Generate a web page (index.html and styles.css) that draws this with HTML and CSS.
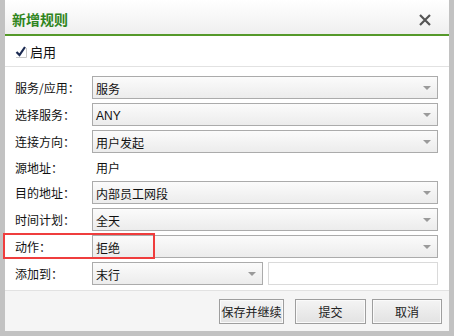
FILE: index.html
```html
<!DOCTYPE html>
<html>
<head>
<meta charset="utf-8">
<link rel="stylesheet" href="styles.css">
</head>
<body>
<div class="dialog">
  <div class="titlebar">
    <span class="title">新增规则</span>
    <svg class="close" width="12" height="12" viewBox="0 0 12 12"><path d="M1 1L11 11M11 1L1 11" stroke="#555" stroke-width="2.2"/></svg>
  </div>
  <div class="enable">
    <svg class="check" width="12" height="13" viewBox="0 0 12 13"><path d="M11.5 3V12.5H1" fill="none" stroke="#c8c8c8" stroke-width="1"/><path d="M1.5 7L4.5 10L10 2" fill="none" stroke="#1c2b52" stroke-width="2.2"/></svg>
    <span>启用</span>
  </div>
  <div class="form">
    <div class="row"><span class="label">服务/应用：</span><div class="select"><span>服务</span><i class="arrow"></i></div></div>
    <div class="row"><span class="label">选择服务：</span><div class="select"><span class="latin">ANY</span><i class="arrow"></i></div></div>
    <div class="row"><span class="label">连接方向：</span><div class="select"><span>用户发起</span><i class="arrow"></i></div></div>
    <div class="row text"><span class="label">源地址：</span><span class="value">用户</span></div>
    <div class="row"><span class="label">目的地址：</span><div class="select"><span>内部员工网段</span><i class="arrow"></i></div></div>
    <div class="row"><span class="label">时间计划：</span><div class="select"><span>全天</span><i class="arrow"></i></div></div>
    <div class="row"><span class="label">动作：</span><div class="select"><span>拒绝</span><i class="arrow"></i></div></div>
    <div class="row"><span class="label">添加到：</span><div class="split"><div class="select small"><span>末行</span><i class="arrow"></i></div><div class="input"></div></div></div>
  </div>
  <div class="footer">
    <button class="btn b1">保存并继续</button>
    <button class="btn b2">提交</button>
    <button class="btn b3">取消</button>
  </div>
  <div class="highlight"></div>
</div>
</body>
</html>
```
FILE: styles.css
```css
html, body {
  margin: 0;
  padding: 0;
  background: #c2c2c2;
  font-family: "Noto Sans CJK SC", "Noto Sans", sans-serif;
  font-size: 12px;
  color: #111;
}
.dialog {
  position: relative;
  margin-left: 5px;
  width: 444px;
  height: 331px;
  background: #fff;
  display: flex;
  flex-direction: column;
}
.titlebar {
  height: 34px;
  border-bottom: 2px solid #55992a;
  background: linear-gradient(#ffffff, #efefef);
  display: flex;
  align-items: center;
  padding: 0 18px 0 7px;
  justify-content: space-between;
}
.title {
  font-size: 14px;
  font-weight: bold;
  color: #2f8520;
  margin-top: 4px;
}
.close {
  margin-top: 5px;
}
.enable {
  height: 30px;
  border-bottom: 1px solid #e2e2e2;
  display: flex;
  align-items: center;
  padding-left: 10px;
  gap: 3px;
  font-size: 13px;
}
.form {
  display: flex;
  flex-direction: column;
  gap: 4px;
  padding: 9px 11px 5px 10px;
}
.row {
  display: flex;
  align-items: center;
  height: 23px;
}
.row.text {
  height: 20px;
}
.label {
  width: 77px;
  flex: none;
  font-size: 12px;
}
.value {
  padding-left: 4px;
}
.select {
  flex: 1;
  height: 21px;
  border: 1px solid #ababab;
  background: linear-gradient(#fbfbfb, #ececec);
  display: flex;
  align-items: center;
  justify-content: space-between;
  padding: 0 6px 0 3px;
  font-size: 12px;
}
.select span {
  margin-top: 2px;
}
.latin {
  font-family: "Liberation Sans", sans-serif;
  font-size: 12px;
}
.arrow {
  width: 0;
  height: 0;
  border-left: 4px solid transparent;
  border-right: 4px solid transparent;
  border-top: 4px solid #9a9a9a;
}
.split {
  flex: 1;
  display: flex;
  gap: 5px;
}
.select.small {
  flex: none;
  width: 160px;
}
.input {
  width: 168px;
  height: 21px;
  border: 1px solid #dadada;
  background: #fff;
}
.footer {
  flex: 1;
  border-top: 1px solid #e2e2e2;
  background: #f5f5f5;
  display: flex;
  justify-content: flex-end;
  align-items: flex-start;
  padding: 8px 7px 0 0;
}
.btn {
  height: 25px;
  border: 1px solid #9e9e9e;
  background: linear-gradient(#f4f4f4, #e2e2e2);
  font-family: "Noto Sans CJK SC", sans-serif;
  font-size: 12px;
  color: #222;
  padding: 0;
  box-shadow: inset 0 0 0 1px #fafafa;
}
.b1 { width: 65px; margin-right: 11px; }
.b2 { width: 71px; margin-right: 6px; }
.b3 { width: 70px; }
.highlight {
  position: absolute;
  left: -2px;
  top: 233px;
  width: 148px;
  height: 22px;
  border: 2px solid #ef3d3d;
}
```
